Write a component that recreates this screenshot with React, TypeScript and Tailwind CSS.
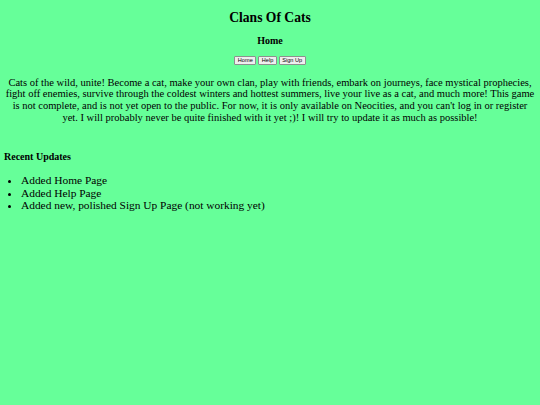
export default function App() {
  const buttonClassName =
    "rounded-[1px] border border-[#8f8f8f] bg-[#efefef] px-[2.5px] py-[0.5px] font-['Liberation_Sans',Arial,sans-serif] text-[5.6px] leading-[normal] text-black";

  return (
    <div className="min-h-screen w-full bg-[#66ff99] px-[4px] font-['Liberation_Serif','Times_New_Roman',serif] text-black">
      <h1 className="pt-[9.5px] text-center text-[13.6px] font-bold leading-[normal]">
        Clans Of Cats
      </h1>

      <h2 className="mt-[9.5px] text-center text-[10px] font-bold leading-[normal]">
        Home
      </h2>

      <div className="mt-[9.5px] flex justify-center gap-[2px]">
        <button className={buttonClassName}>Home</button>
        <button className={buttonClassName}>Help</button>
        <button className={buttonClassName}>Sign Up</button>
      </div>

      <p className="mt-[12px] text-center text-[10.5px] leading-[11.8px]">
        Cats of the wild, unite! Become a cat, make your own clan, play with
        friends, embark on journeys, face mystical prophecies, fight off
        enemies, survive through the coldest winters and hottest summers, live
        your live as a cat, and much more! This game is not complete, and is
        not yet open to the public. For now, it is only available on Neocities,
        and you can't log in or register yet. I will probably never be quite
        finished with it yet ;)! I will try to update it as much as possible!
      </p>

      <h4 className="mt-[27.5px] text-[10px] font-bold leading-[normal]">
        Recent Updates
      </h4>

      <ul className="mt-[12px] list-disc pl-[17px] text-[11.4px] leading-[12.5px]">
        <li>Added Home Page</li>
        <li>Added Help Page</li>
        <li>Added new, polished Sign Up Page (not working yet)</li>
      </ul>
    </div>
  );
}
